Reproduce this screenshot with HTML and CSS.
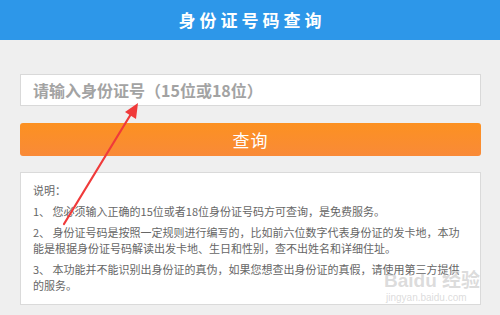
FILE: index.html
```html
<!DOCTYPE html>
<html lang="zh-CN">
<head>
    <meta charset="UTF-8">
    <title>身份证号码查询</title>
    <link rel="stylesheet" href="styles.css">
</head>
<body>
    <div class="header">身份证号码查询</div>

    <div class="main">
        <input class="id-input" type="text" placeholder="请输入身份证号（15位或18位）">
        <button class="query-btn">查询</button>

        <div class="notes">
            <p>说明：</p>
            <p>1、 您必须输入正确的15位或者18位身份证号码方可查询，是免费服务。</p>
            <p>2、 身份证号码是按照一定规则进行编写的，比如前六位数字代表身份证的发卡地，本功能是根据身份证号码解读出发卡地、生日和性别，查不出姓名和详细住址。</p>
            <p>3、 本功能并不能识别出身份证的真伪，如果您想查出身份证的真假，请使用第三方提供的服务。</p>
        </div>
    </div>

    <!-- 标注箭头 -->
    <svg class="arrow" width="500" height="315" viewBox="0 0 500 315">
        <line x1="64" y1="224" x2="131" y2="114" stroke="#f03a3a" stroke-width="2.2" stroke-linecap="round"/>
        <polygon points="138,103 136,119 125,112" fill="#f03a3a"/>
    </svg>

    <div class="watermark">
        <div class="wm-logo">Bai<span>du</span> 经验</div>
        <div class="wm-url">jingyan.baidu.com</div>
    </div>
</body>
</html>
```

FILE: styles.css
```css
body {
    margin: 0;
    background: #efefef;
    font-family: "Noto Sans CJK SC", "Liberation Sans", sans-serif;
}

.header {
    height: 40px;
    line-height: 40px;
    background: #2d97e9;
    color: white;
    text-align: center;
    font-size: 17px;
    font-weight: bold;
    letter-spacing: 4px;
    text-indent: 4px;
}

.main {
    padding: 34px 19px 0 20px;
    display: flex;
    flex-direction: column;
}

.id-input {
    box-sizing: border-box;
    height: 32px;
    border: 1px solid #d9d9d9;
    background: white;
    padding: 0 12px;
    font-family: inherit;
    font-size: 16px;
    font-weight: bold;
    outline: none;
}

.id-input::placeholder {
    color: #a3a3a3;
}

.query-btn {
    margin-top: 17px;
    height: 33px;
    border: none;
    border-radius: 3px;
    background: linear-gradient(#fc9121, #f98a38);
    color: white;
    font-family: inherit;
    font-size: 17px;
    letter-spacing: 1px;
}

.notes {
    margin-top: 16px;
    background: white;
    border: 1px solid #dadada;
    padding: 9px 12px 11px 12px;
    color: #666;
    font-size: 11px;
    line-height: 16px;
}

.notes p {
    margin: 0 0 5px 0;
}

.notes p:last-child {
    margin-bottom: 0;
}

.arrow {
    position: absolute;
    left: 0;
    top: 0;
    pointer-events: none;
}

.watermark {
    position: absolute;
    left: 384px;
    top: 270px;
    color: rgba(190, 190, 190, 0.55);
    font-family: "Liberation Sans", "Noto Sans CJK SC", sans-serif;
    pointer-events: none;
}

.wm-logo {
    font-size: 19px;
    font-weight: bold;
    line-height: 22px;
}

.wm-url {
    font-size: 10px;
    line-height: 12px;
    padding-left: 2px;
}
```
